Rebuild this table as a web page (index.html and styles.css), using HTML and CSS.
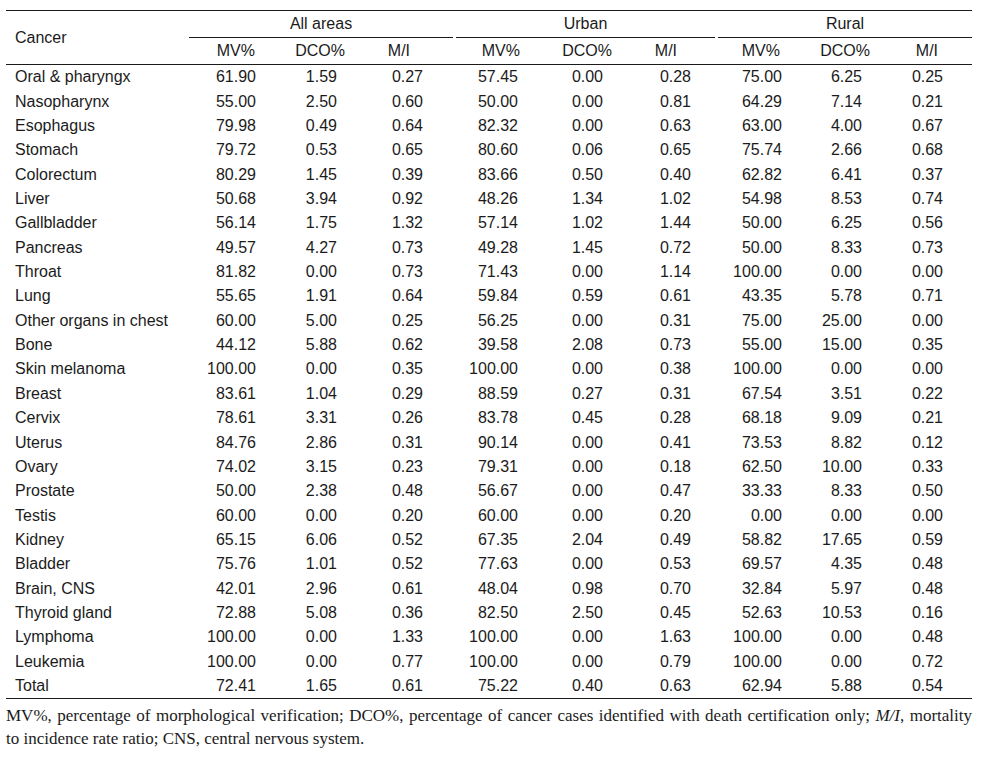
FILE: index.html
```html
<!DOCTYPE html>
<html lang="en">
<head>
<meta charset="utf-8">
<title>Cancer registry quality indicators</title>
<link rel="stylesheet" href="styles.css">
</head>
<body>
<div class="page">
<table class="data">
  <colgroup>
    <col class="w-name"><col class="w2"><col class="w3"><col class="w4"><col class="w5"><col class="w6"><col class="w7"><col class="w8"><col class="w9"><col class="w10">
  </colgroup>
  <thead>
    <tr class="grp">
      <th rowspan="2" class="name-head">Cancer</th>
      <th colspan="3" class="g g-all"><div class="g-line">All areas</div></th>
      <th colspan="3" class="g g-urban"><div class="g-line">Urban</div></th>
      <th colspan="3" class="g g-rural"><div class="g-line">Rural</div></th>
    </tr>
    <tr class="sub">
      <th>MV%</th><th>DCO%</th><th>M/I</th>
      <th>MV%</th><th>DCO%</th><th>M/I</th>
      <th>MV%</th><th>DCO%</th><th>M/I</th>
    </tr>
  </thead>
  <tbody>
    <tr><td>Oral &amp; pharyngx</td><td>61.90</td><td>1.59</td><td>0.27</td><td>57.45</td><td>0.00</td><td>0.28</td><td>75.00</td><td>6.25</td><td>0.25</td></tr>
    <tr><td>Nasopharynx</td><td>55.00</td><td>2.50</td><td>0.60</td><td>50.00</td><td>0.00</td><td>0.81</td><td>64.29</td><td>7.14</td><td>0.21</td></tr>
    <tr><td>Esophagus</td><td>79.98</td><td>0.49</td><td>0.64</td><td>82.32</td><td>0.00</td><td>0.63</td><td>63.00</td><td>4.00</td><td>0.67</td></tr>
    <tr><td>Stomach</td><td>79.72</td><td>0.53</td><td>0.65</td><td>80.60</td><td>0.06</td><td>0.65</td><td>75.74</td><td>2.66</td><td>0.68</td></tr>
    <tr><td>Colorectum</td><td>80.29</td><td>1.45</td><td>0.39</td><td>83.66</td><td>0.50</td><td>0.40</td><td>62.82</td><td>6.41</td><td>0.37</td></tr>
    <tr><td>Liver</td><td>50.68</td><td>3.94</td><td>0.92</td><td>48.26</td><td>1.34</td><td>1.02</td><td>54.98</td><td>8.53</td><td>0.74</td></tr>
    <tr><td>Gallbladder</td><td>56.14</td><td>1.75</td><td>1.32</td><td>57.14</td><td>1.02</td><td>1.44</td><td>50.00</td><td>6.25</td><td>0.56</td></tr>
    <tr><td>Pancreas</td><td>49.57</td><td>4.27</td><td>0.73</td><td>49.28</td><td>1.45</td><td>0.72</td><td>50.00</td><td>8.33</td><td>0.73</td></tr>
    <tr><td>Throat</td><td>81.82</td><td>0.00</td><td>0.73</td><td>71.43</td><td>0.00</td><td>1.14</td><td>100.00</td><td>0.00</td><td>0.00</td></tr>
    <tr><td>Lung</td><td>55.65</td><td>1.91</td><td>0.64</td><td>59.84</td><td>0.59</td><td>0.61</td><td>43.35</td><td>5.78</td><td>0.71</td></tr>
    <tr><td>Other organs in chest</td><td>60.00</td><td>5.00</td><td>0.25</td><td>56.25</td><td>0.00</td><td>0.31</td><td>75.00</td><td>25.00</td><td>0.00</td></tr>
    <tr><td>Bone</td><td>44.12</td><td>5.88</td><td>0.62</td><td>39.58</td><td>2.08</td><td>0.73</td><td>55.00</td><td>15.00</td><td>0.35</td></tr>
    <tr><td>Skin melanoma</td><td>100.00</td><td>0.00</td><td>0.35</td><td>100.00</td><td>0.00</td><td>0.38</td><td>100.00</td><td>0.00</td><td>0.00</td></tr>
    <tr><td>Breast</td><td>83.61</td><td>1.04</td><td>0.29</td><td>88.59</td><td>0.27</td><td>0.31</td><td>67.54</td><td>3.51</td><td>0.22</td></tr>
    <tr><td>Cervix</td><td>78.61</td><td>3.31</td><td>0.26</td><td>83.78</td><td>0.45</td><td>0.28</td><td>68.18</td><td>9.09</td><td>0.21</td></tr>
    <tr><td>Uterus</td><td>84.76</td><td>2.86</td><td>0.31</td><td>90.14</td><td>0.00</td><td>0.41</td><td>73.53</td><td>8.82</td><td>0.12</td></tr>
    <tr><td>Ovary</td><td>74.02</td><td>3.15</td><td>0.23</td><td>79.31</td><td>0.00</td><td>0.18</td><td>62.50</td><td>10.00</td><td>0.33</td></tr>
    <tr><td>Prostate</td><td>50.00</td><td>2.38</td><td>0.48</td><td>56.67</td><td>0.00</td><td>0.47</td><td>33.33</td><td>8.33</td><td>0.50</td></tr>
    <tr><td>Testis</td><td>60.00</td><td>0.00</td><td>0.20</td><td>60.00</td><td>0.00</td><td>0.20</td><td>0.00</td><td>0.00</td><td>0.00</td></tr>
    <tr><td>Kidney</td><td>65.15</td><td>6.06</td><td>0.52</td><td>67.35</td><td>2.04</td><td>0.49</td><td>58.82</td><td>17.65</td><td>0.59</td></tr>
    <tr><td>Bladder</td><td>75.76</td><td>1.01</td><td>0.52</td><td>77.63</td><td>0.00</td><td>0.53</td><td>69.57</td><td>4.35</td><td>0.48</td></tr>
    <tr><td>Brain, CNS</td><td>42.01</td><td>2.96</td><td>0.61</td><td>48.04</td><td>0.98</td><td>0.70</td><td>32.84</td><td>5.97</td><td>0.48</td></tr>
    <tr><td>Thyroid gland</td><td>72.88</td><td>5.08</td><td>0.36</td><td>82.50</td><td>2.50</td><td>0.45</td><td>52.63</td><td>10.53</td><td>0.16</td></tr>
    <tr><td>Lymphoma</td><td>100.00</td><td>0.00</td><td>1.33</td><td>100.00</td><td>0.00</td><td>1.63</td><td>100.00</td><td>0.00</td><td>0.48</td></tr>
    <tr><td>Leukemia</td><td>100.00</td><td>0.00</td><td>0.77</td><td>100.00</td><td>0.00</td><td>0.79</td><td>100.00</td><td>0.00</td><td>0.72</td></tr>
    <tr><td>Total</td><td>72.41</td><td>1.65</td><td>0.61</td><td>75.22</td><td>0.40</td><td>0.63</td><td>62.94</td><td>5.88</td><td>0.54</td></tr>
  </tbody>
</table>
<div class="note">
  <p class="note-line note-first">MV%, percentage of morphological verification; DCO%, percentage of cancer cases identified with death certification only; <i>M/I</i>, mortality</p>
  <p class="note-line">to incidence rate ratio; CNS, central nervous system.</p>
</div>
</div>
</body>
</html>
```

FILE: styles.css
```css
html, body {
  margin: 0;
  padding: 0;
  background: #ffffff;
}

.page {
  padding: 10px 0 0 6px;
  width: 966px;
}

.data {
  width: 966px;
  table-layout: fixed;
  border-collapse: collapse;
  border-spacing: 0;
  font-family: "Liberation Sans", Arial, Helvetica, sans-serif;
  font-size: 16px;
  color: #1b1b1b;
  border-top: 1px solid #1b1b1b;
  border-bottom: 1px solid #1b1b1b;
}

.w-name { width: 183px; }
.w2 { width: 83px; }
.w3 { width: 83px; }
.w4 { width: 99px; }
.w5 { width: 86px; }
.w6 { width: 85px; }
.w7 { width: 92px; }
.w8 { width: 83px; }
.w9 { width: 80px; }
.w10 { width: 92px; }

.data th {
  font-weight: normal;
  padding: 0;
  white-space: nowrap;
}

.name-head {
  text-align: left;
  padding-left: 9px !important;
  vertical-align: middle;
  border-bottom: 1px solid #1b1b1b;
}

.grp th.g {
  height: 26px;
  vertical-align: top;
}

.g-line {
  height: 26px;
  line-height: 26px;
  text-align: center;
  border-bottom: 1px solid #1b1b1b;
}

.g-all .g-line { margin: 0 1px 0 0; }
.g-urban .g-line { margin: 0 2px 0 2px; }
.g-rural .g-line { margin: 0 0 0 1px; }

.sub th {
  height: 26px;
  line-height: 26px;
  text-align: right;
  border-bottom: 1px solid #1b1b1b;
}

.sub th:nth-child(1) { padding-right: 17px; }
.sub th:nth-child(2) { padding-right: 10px; }
.sub th:nth-child(3) { padding-right: 44px; }
.sub th:nth-child(4) { padding-right: 20px; }
.sub th:nth-child(5) { padding-right: 13px; }
.sub th:nth-child(6) { padding-right: 40px; }
.sub th:nth-child(7) { padding-right: 20px; }
.sub th:nth-child(8) { padding-right: 10px; }
.sub th:nth-child(9) { padding-right: 34px; }

.data td {
  height: 24.36px;
  line-height: 24px;
  padding: 0;
  text-align: right;
  white-space: nowrap;
}

.data td:nth-child(1) { text-align: left; padding-left: 9px; }
.data td:nth-child(2) { padding-right: 16px; }
.data td:nth-child(3) { padding-right: 18px; }
.data td:nth-child(4) { padding-right: 31px; }
.data td:nth-child(5) { padding-right: 22px; }
.data td:nth-child(6) { padding-right: 22px; }
.data td:nth-child(7) { padding-right: 26px; }
.data td:nth-child(8) { padding-right: 18px; }
.data td:nth-child(9) { padding-right: 18px; }
.data td:nth-child(10) { padding-right: 29px; }

.note {
  margin-top: 5px;
  font-family: "Liberation Serif", "Times New Roman", serif;
  font-size: 17px;
  color: #1b1b1b;
}

.note-line {
  margin: 0;
  line-height: 23px;
  white-space: nowrap;
}

.note-first {
  white-space: normal;
  text-align: justify;
  text-align-last: justify;
}
```
